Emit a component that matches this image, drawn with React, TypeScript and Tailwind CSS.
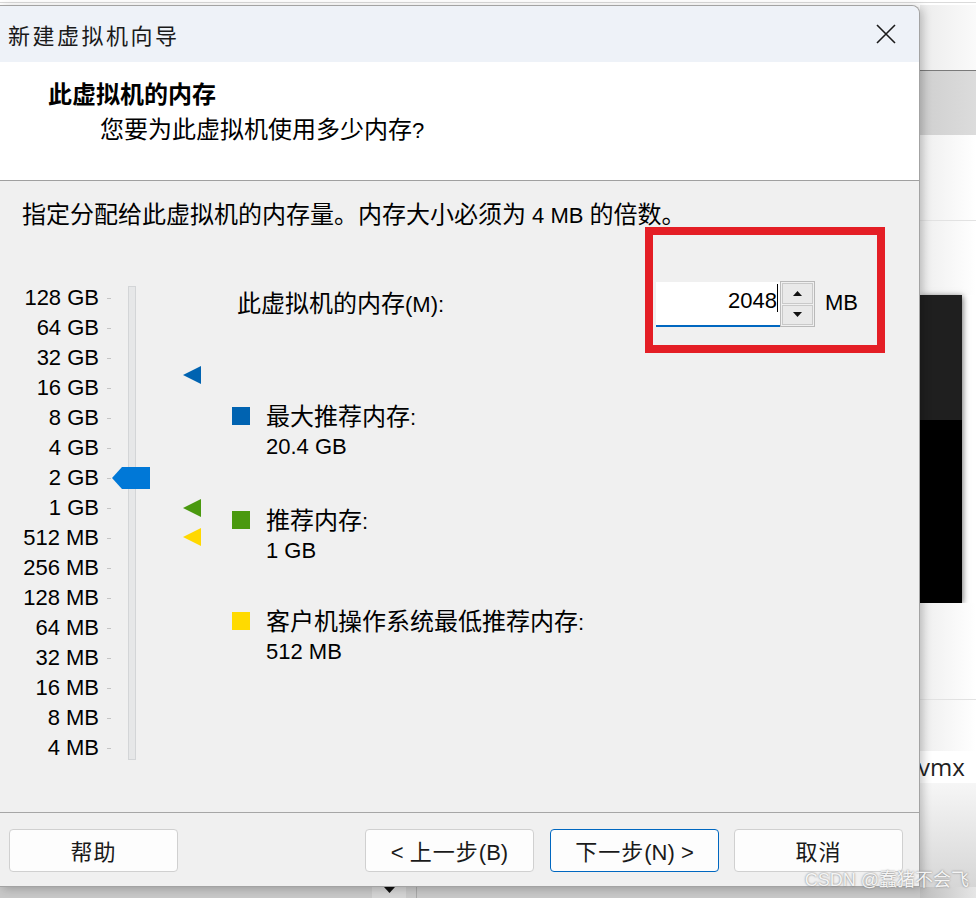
import React from "react";

const cjkFont = "font-['Noto_Sans_CJK_SC',sans-serif]";
const latinFont = "font-['Liberation_Sans','Noto_Sans_CJK_SC',sans-serif]";

const CJK_RE = /([\u3000-\u303f\u4e00-\u9fff\uff00-\uffef]+)/;

// splits a line into CJK runs and latin runs, the two are sized differently
function Mixed({
  text,
  cjk = "text-[24px]",
  latin = "text-[22px]",
}: {
  text: string;
  cjk?: string;
  latin?: string;
}) {
  const parts = text.split(CJK_RE).filter((p) => p.length > 0);
  return (
    <>
      {parts.map((p, i) =>
        CJK_RE.test(p) ? (
          <span key={i} className={`${cjkFont} ${cjk}`}>
            {p}
          </span>
        ) : (
          <span key={i} className={`${latinFont} ${latin} leading-none whitespace-pre`}>
            {p}
          </span>
        )
      )}
    </>
  );
}

const sizes = [
  "128 GB",
  "64 GB",
  "32 GB",
  "16 GB",
  "8 GB",
  "4 GB",
  "2 GB",
  "1 GB",
  "512 MB",
  "256 MB",
  "128 MB",
  "64 MB",
  "32 MB",
  "16 MB",
  "8 MB",
  "4 MB",
];

const legend = [
  { color: "bg-[#0063b1]", label: "最大推荐内存:", value: "20.4 GB", gap: "mt-[46px]" },
  { color: "bg-[#4a990f]", label: "推荐内存:", value: "1 GB", gap: "mt-[40px]" },
  { color: "bg-[#ffda00]", label: "客户机操作系统最低推荐内存:", value: "512 MB", gap: "mt-[37px]" },
];

function Marker({ color, className }: { color: string; className: string }) {
  return (
    <svg width="18" height="18" viewBox="0 0 18 18" className={className}>
      <polygon points="0,9 18,0 18,18" fill={color} />
    </svg>
  );
}

function MemorySlider() {
  return (
    <div className="relative w-[232px] shrink-0 pt-[58px] flex">
      <div className="w-[99px] flex flex-col items-end">
        {sizes.map((s) => (
          <div key={s} className={`h-[30px] leading-[30px] text-[22px] text-black ${latinFont}`}>
            {s}
          </div>
        ))}
      </div>
      <div className="ml-[8px] w-[4px] flex flex-col">
        {sizes.map((s) => (
          <div key={s} className="h-[30px] flex items-center">
            <div className="h-px w-[4px] bg-[#c4c4c4]" />
          </div>
        ))}
      </div>
      <div className="ml-[17px] mt-[3px] mb-[3px] w-[8px] bg-[#e6e7e8] border border-[#d3d5d7]" />

      {/* thumb sits at 2 GB */}
      <svg width="38" height="22" viewBox="0 0 38 22" className="absolute left-[112px] top-[242px]">
        <polygon points="0,11 10,0 38,0 38,22 10,22" fill="#0078d7" />
      </svg>
      <Marker color="#0063b1" className="absolute left-[183px] top-[141px]" />
      <Marker color="#4a990f" className="absolute left-[183px] top-[274px]" />
      <Marker color="#ffd800" className="absolute left-[183px] top-[303px]" />
    </div>
  );
}

function Spinner() {
  return (
    <div className="flex items-center">
      <div className="w-[124px] h-[45px] bg-white border-b-2 border-[#0067c0] flex items-start justify-end pr-[2px]">
        <span className={`mt-[7px] leading-[24px] text-[22px] text-black ${latinFont}`}>2048</span>
        <span className="mt-[2px] h-[28px] w-px bg-black" />
      </div>
      <div className="w-[35px] h-[46px] flex flex-col border border-[#b9b9b9] bg-[#f0f0f0]">
        <div className="flex-1 m-px border border-[#c9c9c9] bg-[#e9e9e9] flex items-center justify-center">
          <svg width="9" height="5" viewBox="0 0 9 5">
            <polygon points="0,5 4.5,0 9,5" fill="#111" />
          </svg>
        </div>
        <div className="flex-1 m-px mt-0 border border-[#c9c9c9] bg-[#e9e9e9] flex items-center justify-center">
          <svg width="9" height="5" viewBox="0 0 9 5">
            <polygon points="0,0 9,0 4.5,5" fill="#111" />
          </svg>
        </div>
      </div>
      <span className={`ml-[10px] -mt-[4px] text-[22px] text-black ${latinFont}`}>MB</span>
    </div>
  );
}

function WizardButton({ label, primary }: { label: string; primary?: boolean }) {
  return (
    <button
      className={`w-[169px] h-[43px] rounded-[4px] bg-[#fdfdfd] text-[#1a1a1a] leading-[41px] border ${cjkFont} text-[22px] ${
        primary ? "border-[#0067c0]" : "border-[#d0d0d0]"
      }`}
    >
      <Mixed text={label} cjk="text-[22px] tracking-[1px]" latin="text-[22px]" />
    </button>
  );
}

function Dialog() {
  return (
    <div className="relative z-10 w-[920px] shrink-0 flex flex-col bg-[#f0f0f0] border-t border-r border-b border-[#a3a3a3] rounded-tr-[8px] shadow-[3px_2px_10px_rgba(0,0,0,0.22)]">
      {/* title bar */}
      <div className="h-[56px] shrink-0 bg-[#eef2f8] rounded-tr-[8px] flex items-center justify-between pl-[8px] pr-[23px]">
        <span className={`text-[22px] tracking-[2.5px] text-[#1a1a1a] ${cjkFont}`}>新建虚拟机向导</span>
        <svg width="20" height="20" viewBox="0 0 20 20">
          <path d="M1 1 L19 19 M19 1 L1 19" stroke="#1a1a1a" strokeWidth="1.6" />
        </svg>
      </div>

      {/* header */}
      <div className="h-[119px] shrink-0 bg-white border-b border-[#a0a0a0] pt-[16px]">
        <div className={`pl-[48px] h-[30px] leading-[30px] text-[24px] font-bold text-black ${cjkFont}`}>此虚拟机的内存</div>
        <div className={`pl-[100px] mt-[5px] h-[30px] leading-[30px] text-[24px] text-black ${cjkFont}`}>
          <Mixed text="您要为此虚拟机使用多少内存?" />
        </div>
      </div>

      {/* body */}
      <div className="flex-1 flex flex-col min-h-0">
        <div className={`mt-[20px] pl-[22px] h-[24px] leading-[24px] text-[24px] text-black ${cjkFont}`}>
          <Mixed text="指定分配给此虚拟机的内存量。内存大小必须为 4 MB 的倍数。" />
        </div>

        <div className="flex">
          <MemorySlider />
          <div className="flex-1 pr-[34px] pt-[2px] flex flex-col">
            <div className="flex items-start">
              <div className={`ml-[5px] mt-[63px] h-[24px] leading-[24px] text-[24px] text-black ${cjkFont}`}>
                <Mixed text="此虚拟机的内存(M):" />
              </div>
              <div className="ml-auto w-[240px] h-[126px] border-[8px] border-[#e41e25] pt-[46px] pl-[3px]">
                <Spinner />
              </div>
            </div>

            {legend.map((l) => (
              <div key={l.label} className={`flex ${l.gap}`}>
                <div className={`w-[18px] h-[18px] mt-[8px] ${l.color}`} />
                <div className="ml-[16px] text-black">
                  <div className={`h-[32px] leading-[32px] text-[24px] ${cjkFont}`}>
                    <Mixed text={l.label} />
                  </div>
                  <div className={`h-[32px] leading-[32px] text-[22px] ${latinFont}`}>{l.value}</div>
                </div>
              </div>
            ))}
          </div>
        </div>

        <div className="flex-1" />

        {/* footer */}
        <div className="shrink-0 border-t border-[#a6a6a6] pt-[16px] pb-[14px] pl-[9px] pr-[16px] flex">
          <WizardButton label="帮助" />
          <div className="ml-auto flex">
            <WizardButton label="< 上一步(B)" />
            <div className="ml-[16px]">
              <WizardButton label="下一步(N) >" primary />
            </div>
            <div className="ml-[15px]">
              <WizardButton label="取消" />
            </div>
          </div>
        </div>
      </div>
    </div>
  );
}

function Backdrop() {
  return (
    <div className="flex-1 flex flex-col bg-white">
      <div className="h-[65px] bg-gradient-to-r from-[#ececec] to-[#fafafa]" />
      <div className="h-[65px] border-t border-[#7a7a7a] bg-gradient-to-r from-[#cfcfcf] to-[#dcdcdc]" />
      <div className="h-[86px] border-b border-[#e2e2e2] bg-gradient-to-r from-[#eeeeee] to-white" />
      <div className="h-[74px] bg-gradient-to-r from-[#eeeeee] to-white" />
      <div className="w-[42px] h-[308px] flex flex-col shadow-[1px_1px_6px_rgba(0,0,0,0.55)]">
        <div className="h-[125px] bg-[#1f1f1f]" />
        <div className="flex-1 bg-black" />
      </div>
      <div className="h-[97px] border-b border-[#e2e2e2] bg-gradient-to-r from-[#eeeeee] to-white" />
      <div className="h-[51px] bg-gradient-to-r from-[#eeeeee] to-white" />
      <div className="-ml-[2px] leading-[32px] text-[24px] text-[#222] font-['Open_Sans',sans-serif]">vmx</div>
      <div className="flex-1 bg-gradient-to-b from-[#f6f6f6] to-[#d6d6d6]" />
    </div>
  );
}

export default function App() {
  return (
    <div className="relative w-[976px] h-[898px] overflow-hidden bg-white flex flex-col">
      <div className="h-[5px] shrink-0 flex flex-col">
        <div className="mt-[2px] h-px bg-[#dadada]" />
      </div>
      <div className="flex-1 min-h-0 flex">
        <Dialog />
        <Backdrop />
      </div>
      <div className="h-[11px] shrink-0 flex">
        <div className="w-[372px] bg-[#c8c8c8]" />
        <div className="w-[34px] bg-[#d4d4d4] flex justify-center">
          <svg width="11" height="6" viewBox="0 0 11 6">
            <polygon points="0,0 11,0 5.5,6" fill="#111" />
          </svg>
        </div>
        <div className="w-[10px] bg-[#c8c8c8]" />
        <div className="w-px bg-[#a8a8a8]" />
        <div className="flex-1 bg-[#c8c8c8]" />
        <div className="w-[56px] bg-gradient-to-r from-[#bdbdbd] to-[#e6e6e6]" />
      </div>

      {/* watermark */}
      <div className="absolute z-20 right-[7px] bottom-[8px] text-[18px] leading-[20px] text-[#f4f4f4] [text-shadow:0_0_2px_#6f6f6f] font-['Liberation_Sans','Noto_Sans_CJK_SC',sans-serif]">
        CSDN @蠢猪不会飞
      </div>
    </div>
  );
}
